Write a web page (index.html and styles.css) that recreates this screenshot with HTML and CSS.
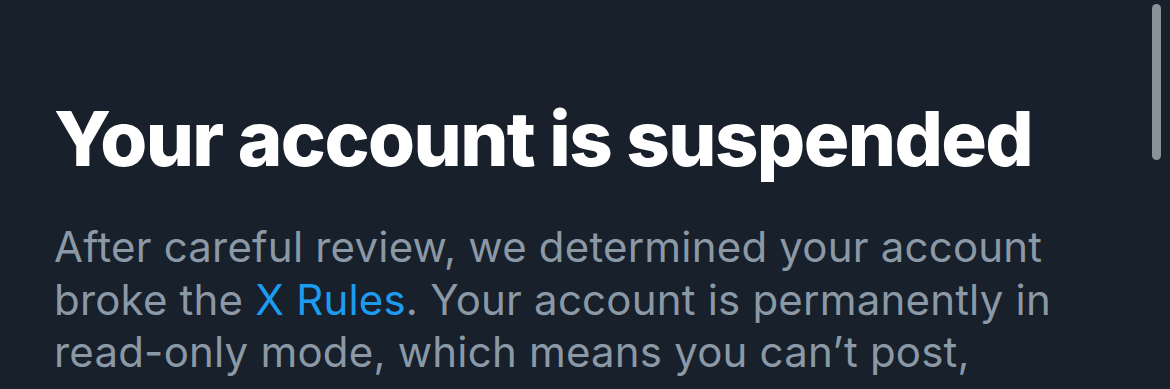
FILE: index.html
```html
<!DOCTYPE html>
<html lang="en">
<head>
<meta charset="utf-8">
<link rel="stylesheet" href="styles.css">
<title>Your account is suspended</title>
</head>
<body>
<main class="page">
  <h1 class="title">Your account is suspended</h1>
  <p class="body-text">After careful review, we determined your account broke the <a class="link" href="#">X Rules</a>. Your account is permanently in read-only mode, which means you can’t post,</p>
</main>
<div class="scrollbar"></div>
</body>
</html>
```
FILE: styles.css
```css
html, body {
  margin: 0;
  padding: 0;
  background: #17202b;
  height: 100%;
  overflow: hidden;
}
.page {
  padding: 92px 56px 0 54px;
  width: 1060px;
}
.title {
  margin: 0;
  font-family: Inter, "Liberation Sans", sans-serif;
  font-weight: 800;
  font-size: 76px;
  line-height: 92px;
  color: #ffffff;
  letter-spacing: -1.6px;
  white-space: nowrap;
}
.body-text {
  margin: 37px 0 0 0;
  font-family: Inter, "Liberation Sans", sans-serif;
  font-weight: 400;
  font-size: 42px;
  line-height: 52.5px;
  color: #8b98a5;
  letter-spacing: 0.2px;
  width: 1020px;
}
.link {
  color: #1d9bf0;
  text-decoration: none;
}
.scrollbar {
  position: absolute;
  top: 4px;
  left: 1152px;
  width: 9px;
  height: 156px;
  border-radius: 5px;
  background: #8a9199;
}
```
